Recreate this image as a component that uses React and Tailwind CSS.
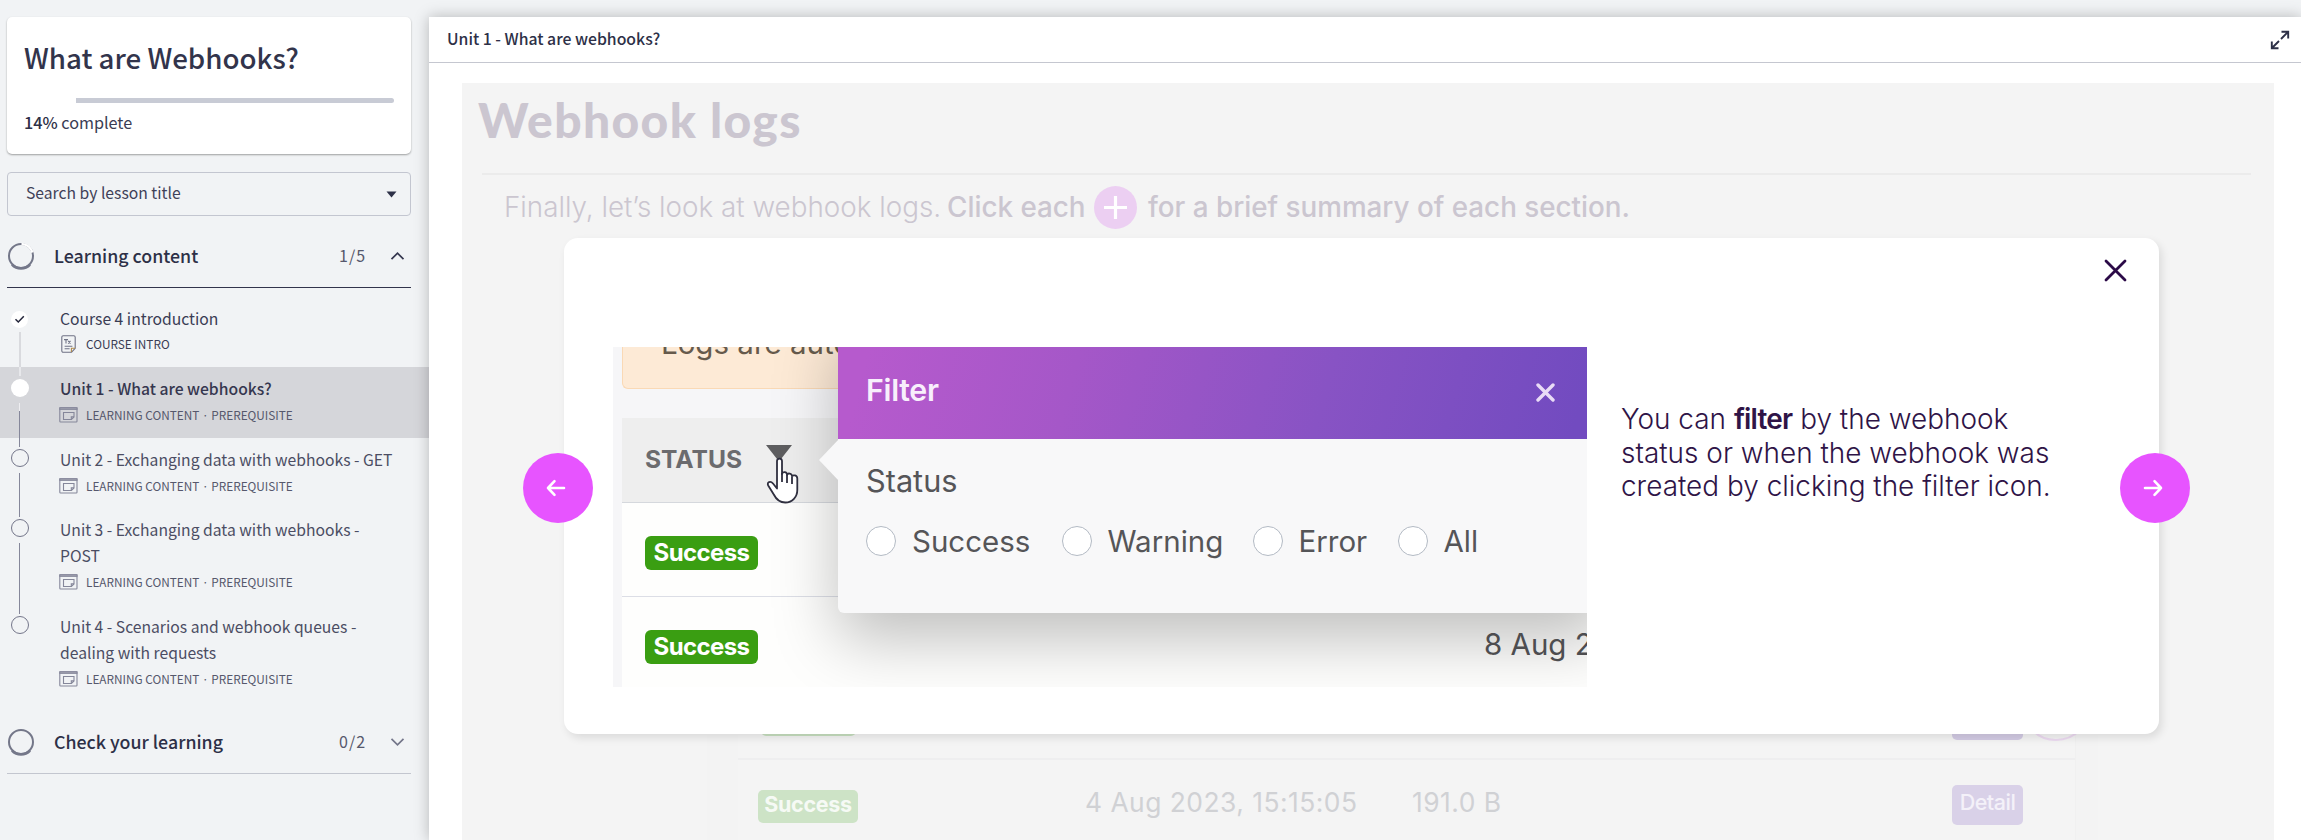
import React from "react";

const LESSONS = [
  { title: ["Course 4 introduction"], meta: "COURSE INTRO", state: "done", height: "h-[70px]" },
  { title: ["Unit 1 - What are webhooks?"], meta: "LEARNING CONTENT · PREREQUISITE", state: "current", height: "h-[71px]" },
  { title: ["Unit 2 - Exchanging data with webhooks - GET"], meta: "LEARNING CONTENT · PREREQUISITE", state: "todo", height: "h-[70px]" },
  { title: ["Unit 3 - Exchanging data with webhooks -", "POST"], meta: "LEARNING CONTENT · PREREQUISITE", state: "todo", height: "h-[97px]" },
  { title: ["Unit 4 - Scenarios and webhook queues -", "dealing with requests"], meta: "LEARNING CONTENT · PREREQUISITE", state: "last", height: "h-[97px]" },
];

function DocIcon() {
  return (
    <svg width="15" height="18" viewBox="0 0 15 18" fill="none" stroke="#6f7285" strokeWidth="1.1">
      <path d="M2.2.8h10.600c.8 0 1.400.6 1.400 1.400V13.300l-3.600 3.900H2.200c-.8 0-1.400-.6-1.400-1.400V2.200c0-.8.6-1.400 1.400-1.400z" />
      <path d="M14 13.300h-3.600v3.700" stroke="#b08a4a" />
      <path d="M3 4.600h4M5 4.600v4M7.200 5.800l2.300 2.800M9.500 5.800L7.200 8.600M3.600 11.300h7.800M3.600 13.700h5" />
    </svg>
  );
}

function WindowIcon() {
  return (
    <svg width="19" height="16" viewBox="0 0 19 16" fill="none" stroke="#85879a" strokeWidth="1.100">
      <rect x=".8" y=".8" width="17.200" height="14.200" rx=".8" />
      <rect x=".8" y=".8" width="17.200" height="1.500" fill="#b4b5c1" />
      <path d="M4.500 5.500h10.500v4.400l-2.600 2.600H4.500z" />
      <path d="M15 9.900h-2.700v2.600" />
    </svg>
  );
}

function Marker({ state }) {
  if (state === "done") {
    return (
      <svg className="mt-[5px] shrink-0" width="17" height="17" viewBox="0 0 17 17">
        <circle cx="8.500" cy="8.500" r="8.500" fill="#fff" />
        <path d="M4.500 8.300l2.800 2.700 5.500-5.700" fill="none" stroke="#23253a" strokeWidth="1.500" />
      </svg>
    );
  }
  if (state === "current") {
    return <div className="mt-[3px] size-[18px] shrink-0 rounded-full bg-white" />;
  }
  return <div className="mt-[2px] size-[18px] shrink-0 rounded-full border border-[#74768a]" />;
}

function Lesson({ lesson, index }) {
  const current = lesson.state === "current";
  const done = lesson.state === "done";
  return (
    <div className={`flex w-full ${lesson.height} ${current ? "bg-[#d5d6da]" : ""}`}>
      <div className="flex w-[39px] shrink-0 flex-col items-center">
        <div className={`h-[9px] shrink-0 ${index === 0 ? "w-0" : current ? "w-[2px] bg-[#e7e8eb]" : "w-px bg-[#85879a]"}`} />
        <Marker state={lesson.state} />
        {done && <div className="mt-1 w-[2px] flex-1 bg-[#d9dade]" />}
        {current && <div className="mt-[6px] h-2 w-px bg-[#eeeef1]" />}
        {!done && lesson.state !== "last" && (
          <div className={`w-px flex-1 bg-[#85879a] ${current ? "" : "mt-[6px]"}`} />
        )}
      </div>
      <div className="flex flex-col pt-2 pl-[21px]">
        {lesson.title.map((line) => (
          <div
            key={line}
            className={`h-[26px] text-[15.700px] leading-[27px] whitespace-nowrap ${
              current ? "font-medium text-[#35374f]" : done ? "text-[#3a3c54]" : "text-[#4b4d63]"
            }`}
          >
            {line}
          </div>
        ))}
        <div className={`flex h-[26px] items-center ${done ? "" : "mt-px"}`}>
          <span className="flex w-[26px] items-center">
            {done ? <span className="ml-px"><DocIcon /></span> : <span className="-ml-px"><WindowIcon /></span>}
          </span>
          <span className={`text-[11.800px] leading-[26px] whitespace-nowrap ${done ? "text-[#3a3c54]" : "text-[#56586c]"}`}>
            {lesson.meta}
          </span>
        </div>
      </div>
    </div>
  );
}

function SectionHeader({ title, count, open }) {
  return (
    <div className={`ml-[7px] flex h-[62px] w-[404px] items-center border-b ${open ? "border-[#32344b]" : "border-[#c3c6cf]"}`}>
      <svg className="mb-px ml-px" width="27" height="28" viewBox="0 0 27 28" fill="none">
        <circle cx="13" cy="14" r="12" stroke="#747789" strokeWidth="2" />
        <path d="M4 22.500a12.300 12.300 0 0 0 18 0" stroke="#747789" strokeWidth="2.600" />
        {open && <path d="M13.500 2a12 12 0 0 1 11 8.500" stroke="#fff" strokeWidth="2.600" />}
      </svg>
      <span className="mb-[4px] ml-[19px] flex-1 text-[17.800px] leading-[26px] font-medium text-[#2d3047]">{title}</span>
      <span className="mb-[4px] w-[27px] text-[16px] tracking-[1px] text-[#56586c]">{count}</span>
      <svg className="mr-[6px] mb-px ml-[24px]" width="15" height="10" viewBox="0 0 15 10" fill="none" stroke={open ? "#35374f" : "#74768a"} strokeWidth="1.700">
        <path d={open ? "M1.500 8.200l6-6 6 6" : "M1.500 1.800l6 6 6-6"} />
      </svg>
    </div>
  );
}

function Sidebar() {
  return (
    <aside className="flex w-[429px] shrink-0 flex-col font-['Noto_Sans_CJK_JP','Noto_Sans_CJK_SC',sans-serif]">
      <div className="mt-[17px] ml-[7px] flex h-[137px] w-[404px] flex-col rounded-[5px] bg-white px-[17px] shadow-[0_1px_2px_rgba(0,0,0,0.350)]">
        <h1 className="mt-[19px] h-[43px] text-[27.700px] leading-[42px] font-medium whitespace-nowrap text-[#32344b]">What are Webhooks?</h1>
        <div className="mt-[19px] flex h-[5px] w-[370px]">
          <div className="w-[52px] bg-white" />
          <div className="flex-1 rounded-r-[3px] bg-[#c8cbd5]" />
        </div>
        <div className="mt-[6px] text-[16.200px] leading-[26px] text-[#3a3c54]">
          <span className="font-medium text-[#2d3047]">14%</span> complete
        </div>
      </div>
      <div className="mt-[18px] ml-[7px] flex h-[44px] w-[404px] items-center justify-between rounded-[4px] border border-[#c3c6d0] pr-[13px] pl-[18px]">
        <span className="mb-[2px] text-[15.700px] text-[#3f4158]">Search by lesson title</span>
        <svg width="11" height="7" viewBox="0 0 11 7"><path d="M.5.500h10L5.500 6.500z" fill="#2d3047" /></svg>
      </div>
      <div className="mt-[10px]"><SectionHeader title="Learning content" count="1/5" open /></div>
      <div className="mt-[9px] mb-[10px] flex flex-col">
        {LESSONS.map((lesson, i) => <Lesson key={lesson.title[0]} lesson={lesson} index={i} />)}
      </div>
      <SectionHeader title="Check your learning" count="0/2" />
    </aside>
  );
}

function Radio({ label, width }) {
  return (
    <label className={`flex items-center ${width}`}>
      <span className="mr-[16px] size-[30px] shrink-0 rounded-full border-[1.500px] border-[#b3bac4] bg-white" />
      <span>{label}</span>
    </label>
  );
}

function SuccessBadge() {
  return (
    <span className="flex h-[34px] w-[113px] items-center justify-center rounded-[6px] bg-[#3a9e12] text-[24px] font-bold tracking-[-0.600px] text-white">Success</span>
  );
}

function HandCursor() {
  return (
    <svg className="absolute top-[110px] left-[152px]" width="36" height="48" viewBox="0 0 36 48">
      <path
        d="M12 4c0-3.300 5-3.300 5 0v13c.5-2.800 5-2.500 5 .8.800-2 5-1.700 5 1.500 1-1.700 5.300-1.200 5.300 2.200v11.500c0 7-5 12.500-12 12.500-6.800 0-9.500-4-11.500-8L3.200 28.500C1.500 25 5.500 23.500 8 26.500l4 5z"
        fill="#fff" stroke="#2f2f3f" strokeWidth="1.800" strokeLinejoin="round"
      />
      <path d="M17 16v9M22 18v8M27 20v7" stroke="#2f2f3f" strokeWidth="1.800" />
    </svg>
  );
}

function FilterShot() {
  return (
    <div className="relative mt-[109px] ml-[49px] h-[340px] w-[974px] shrink-0 overflow-hidden bg-[#f6f6f8] pl-[9px]">
      <div className="flex h-[42px] w-full items-start rounded-bl-[6px] border-b border-l border-[#fad9b5] bg-[#fdead6]">
        <span className="-mt-[22px] ml-[38px] text-[29.500px] leading-[36px] whitespace-nowrap text-[#665a4c]">Logs are automatically</span>
      </div>
      <div className="mt-[29px] flex h-[85px] items-center border-b border-[#d5d8dd] bg-[#eeeeee] pl-[23px]">
        <span className="mb-[2px] w-[98px] text-[24.600px] font-bold text-[#6b6b6e]">STATUS</span>
        <svg className="mb-[14px] ml-[23px]" width="26" height="17" viewBox="0 0 26 17"><path d="M0 0h26L15 14h-4z" fill="#5e5e60" /></svg>
      </div>
      <div className="flex h-[94px] items-start border-b border-[#dcdee6] bg-[#fefefd] pt-[33px] pl-[23px]"><SuccessBadge /></div>
      <div className="flex h-[100px] items-start bg-[#fefefd] pt-[33px] pl-[23px]"><SuccessBadge /></div>

      <div className="absolute top-[-30px] left-[225px] h-[296px] w-[770px] rounded-[6px] bg-[#f8f8f9] shadow-[0_26px_64px_rgba(0,0,0,0.250)]">
        <svg className="absolute top-[122px] left-[-19px]" width="20" height="42" viewBox="0 0 20 42"><path d="M20 0L0 21l20 21z" fill="#f8f8f9" /></svg>
        <div className="flex h-[122px] w-[749px] items-center justify-between bg-[linear-gradient(105deg,#b65acd_5%,#a557c8_32%,#8853c4_65%,#724bc0_98%)] pt-[28px] pr-[32px] pl-[28px]">
          <span className="mb-[2px] text-[30.300px] font-semibold tracking-[-0.300px] text-[#f8effc]">Filter</span>
          <svg width="19" height="19" viewBox="0 0 19 19" stroke="#e9dcf6" strokeWidth="3.400" strokeLinecap="round"><path d="M2 2l15 15M17 2L2 17" /></svg>
        </div>
        <div className="flex flex-col pl-[28px] text-[29.500px] leading-[36px] text-[#555558]">
          <div className="mt-[24px] text-[30.700px]">Status</div>
          <div className="mt-[24px] flex">
            <Radio label="Success" width="w-[195.500px]" />
            <Radio label="Warning" width="w-[191px]" />
            <Radio label="Error" width="w-[145px]" />
            <Radio label="All" width="w-[90px]" />
          </div>
        </div>
      </div>
      <span className="absolute top-[279px] left-[871px] text-[29.500px] leading-[36px] whitespace-nowrap text-[#4d4d50]">8 Aug 2023</span>
      <HandCursor />
    </div>
  );
}

function ArrowButton({ side }) {
  return (
    <button className={`absolute top-[215px] flex size-[70px] items-center justify-center rounded-full bg-[#e754ff] ${side === "left" ? "left-[-41px]" : "right-[-31px]"}`}>
      <svg className={`mr-[4px] mb-px ${side === "left" ? "" : "rotate-180"}`} width="20" height="18" viewBox="0 0 20 18" fill="none" stroke="#fff" strokeWidth="2.600" strokeLinecap="round" strokeLinejoin="round">
        <path d="M18 9H2M8.500 2.200L2 9l6.500 6.800" />
      </svg>
    </button>
  );
}

function FilterModal() {
  return (
    <div className="absolute top-[155px] left-[102px] flex h-[496px] w-[1595px] rounded-[14px] bg-white shadow-[3px_4px_8px_rgba(0,0,0,0.100)]">
      <FilterShot />
      <div className="mt-[165px] ml-[34px] text-[27.950px] leading-[33.500px] font-light whitespace-nowrap text-[#2f1447]">
        <div>You can <b className="font-semibold tracking-[-0.800px]">filter</b> by the webhook</div>
        <div>status or when the webhook was</div>
        <div>created by clicking the filter icon.</div>
      </div>
      <svg className="absolute top-[21px] right-[32px]" width="23" height="23" viewBox="0 0 23 23" stroke="#2b0a47" strokeWidth="2.800" strokeLinecap="round"><path d="M2 2l19 19M21 2L2 21" /></svg>
      <ArrowButton side="left" />
      <ArrowButton side="right" />
    </div>
  );
}

function LogTable() {
  return (
    <div className="mt-[498px] ml-[245px] flex h-[113px] w-[1391px] shrink-0 bg-[#f3f3f3] pr-[22px] pl-[31px]">
      <div className="flex w-full flex-col border-r border-[#f0f0f0] bg-[#f4f4f4]">
        <div className="flex h-[13px] shrink-0 items-start pl-[23px]">
          <div className="h-[9px] w-[95px] rounded-b-[5px] bg-[#c8e0c0]" />
          <div className="ml-[1096px] h-[13px] w-[71px] rounded-b-[5px] bg-[#d3cbe4]" />
        </div>
        <div className="mt-[18px] h-[2px] shrink-0 bg-[#eeeeef]" />
        <div className="mt-[30px] flex shrink-0 items-start text-[26.400px] whitespace-nowrap text-[#d0d1d4]">
          <span className="ml-[20px] flex h-[33px] w-[100px] items-center justify-center rounded-[5px] bg-[#cde3c6] pb-[4px] text-[21.500px] font-bold tracking-[-0.300px] text-[#f6faf5]">Success</span>
          <span className="ml-[227px] w-[327px] leading-[24px] tracking-[0.480px]">4 Aug 2023, 15:15:05</span>
          <span className="w-[540px] leading-[24px] tracking-[0.480px]">191.0 B</span>
          <span className="-mt-[5px] flex h-[40px] w-[71px] items-center justify-center rounded-[5px] bg-[#d9d1e8] pb-[6px] text-[21.500px] font-medium tracking-[-0.500px] text-[#f4f1f9]">Detail</span>
        </div>
      </div>
    </div>
  );
}

function Stage() {
  return (
    <div className="relative mt-[20px] ml-[33px] flex h-[757px] w-[1812px] flex-col overflow-hidden bg-[#f4f4f4] font-[Inter,sans-serif]">
      <h2 className="mt-[7px] ml-[16px] h-[61px] font-[Lato,sans-serif] text-[48px] leading-[60px] font-black tracking-[1.350px] text-[#cbc6d0]">Webhook logs</h2>
      <div className="mt-[22px] ml-[20px] h-[2px] w-[1769px] shrink-0 bg-[#ebebeb]" />
      <div className="mt-[11px] ml-[42px] flex h-[43px] shrink-0 items-center text-[27.800px] whitespace-nowrap text-[#cbc6d0]">
        <span className="w-[443px] font-light">Finally, let’s look at webhook logs.</span>
        <span className="w-[147px] font-medium">Click each</span>
        <svg width="43" height="43" viewBox="0 0 43 43"><circle cx="21.500" cy="21.500" r="21.500" fill="#eccff2" /><path d="M10 21.500h23M21.500 10v23" stroke="#fff" strokeWidth="3.200" /></svg>
        <span className="ml-[11px] font-medium">for a brief summary of each section.</span>
      </div>
      <LogTable />
      <div className="absolute top-[588px] left-[1559px] size-[70px] rounded-full border-2 border-[#ecdaf1]" />
      <FilterModal />
    </div>
  );
}

export default function App() {
  return (
    <div className="flex h-[840px] w-[2301px] overflow-hidden bg-[#f1f3f5]">
      <Sidebar />
      <main className="relative mt-[17px] flex w-[1872px] flex-col bg-white shadow-[0_0_14px_rgba(0,0,0,0.250)]">
        <header className="flex h-[46px] shrink-0 items-center justify-between border-b border-[#c5c7d0] pr-[11px] pl-[18px] font-['Noto_Sans_CJK_JP','Noto_Sans_CJK_SC',sans-serif]">
          <span className="mb-[2px] text-[15.800px] font-medium text-[#2d3047]">Unit 1 - What are webhooks?</span>
          <svg width="20" height="20" viewBox="0 0 20 20" fill="none" stroke="#2d3047" strokeWidth="1.900"><path d="M11.500 1.800h6.700v6.700M18 2l-7 7M8.500 18.200H1.800v-6.700M2 18l7-7" /></svg>
        </header>
        <Stage />
      </main>
    </div>
  );
}
